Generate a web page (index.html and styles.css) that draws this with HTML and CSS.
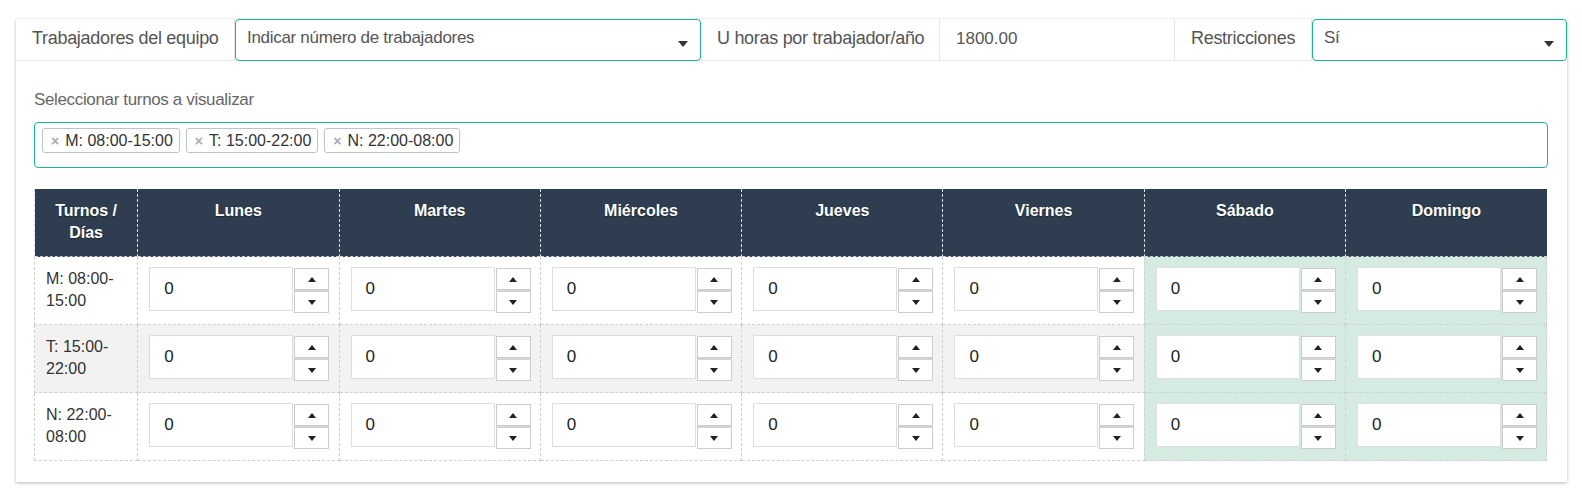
FILE: index.html
```html
<!DOCTYPE html>
<html lang="es">
<head>
    <meta charset="UTF-8">
    <meta name="viewport" content="width=device-width, initial-scale=1.0">
    <title>Turnos</title>
    <link rel="stylesheet" href="styles.css">
</head>
<body>
    <div class="page">
        <div class="card">
            <div class="toolbar">
                <div class="addon">Trabajadores del equipo</div>
                <div class="select">Indicar número de trabajadores<span class="caret"></span></div>
                <div class="addon">U horas por trabajador/año</div>
                <div class="field">1800.00</div>
                <div class="addon">Restricciones</div>
                <div class="select">Sí<span class="caret"></span></div>
            </div>

            <div class="card-body">
                <div class="shifts-label">Seleccionar turnos a visualizar</div>
                <div class="tagbox">
                    <span class="tag"><span class="tag-x">×</span>M: 08:00-15:00</span>
                    <span class="tag"><span class="tag-x">×</span>T: 15:00-22:00</span>
                    <span class="tag"><span class="tag-x">×</span>N: 22:00-08:00</span>
                </div>

                <table class="grid" id="grid">
                    <thead>
                        <tr>
                            <th class="first">Turnos / Días</th>
                            <th>Lunes</th>
                            <th>Martes</th>
                            <th>Miércoles</th>
                            <th>Jueves</th>
                            <th>Viernes</th>
                            <th>Sábado</th>
                            <th>Domingo</th>
                        </tr>
                    </thead>
                    <tbody></tbody>
                </table>
            </div>
        </div>
    </div>

    <script>
        const shifts = ['M: 08:00-15:00', 'T: 15:00-22:00', 'N: 22:00-08:00'];
        const days = 7;

        function spinner() {
            return '<div class="spin">' +
                '<input class="spin-input" type="text" value="0">' +
                '<div class="spin-btns">' +
                '<button class="spin-btn"><span class="tri up"></span></button>' +
                '<button class="spin-btn"><span class="tri down"></span></button>' +
                '</div></div>';
        }

        function buildRows() {
            const body = document.querySelector('#grid tbody');
            let html = '';
            shifts.forEach(function (s) {
                const parts = s.split('-');
                html += '<tr><td class="shift">' + parts[0] + '-<br>' + parts[1] + '</td>';
                for (let d = 0; d < days; d++) {
                    const weekend = d >= 5 ? ' weekend' : '';
                    html += '<td class="day' + weekend + '">' + spinner() + '</td>';
                }
                html += '</tr>';
            });
            body.innerHTML = html;
        }

        buildRows();
    </script>
</body>
</html>
```

FILE: styles.css
```css
body {
    margin: 0;
    background: #fff;
    font-family: "Liberation Sans", Arial, sans-serif;
    color: #333;
}
.page {
    padding: 19px 0 20px 16px;
}
.card {
    width: 1551px;
    background: #fff;
    box-shadow: 0 1px 3px rgba(0, 0, 0, 0.3);
    padding-bottom: 21px;
}
.toolbar {
    display: grid;
    grid-template-columns: 219px 466px 239px 235px 137px 255px;
    height: 42px;
}
.addon,
.field {
    display: flex;
    align-items: center;
    padding: 0 16px 2px;
    font-size: 18px;
    letter-spacing: -0.3px;
    color: #555;
    border-right: 1px solid #e6e6e6;
    border-bottom: 1px solid #e6e6e6;
    white-space: nowrap;
}
.field {
    font-size: 17px;
    letter-spacing: 0;
}
.select {
    position: relative;
    border: 1px solid #1db38f;
    border-radius: 4px;
    padding: 6px 11px 0;
    font-size: 17px;
    letter-spacing: -0.3px;
    line-height: 24px;
    color: #555;
}
.caret {
    position: absolute;
    right: 12px;
    top: 21px;
    border-top: 6px solid #333;
    border-left: 5px solid transparent;
    border-right: 5px solid transparent;
}
.card-body {
    padding: 0 19px 0 18px;
}
.shifts-label {
    margin-top: 28px;
    line-height: 22px;
    font-size: 17px;
    letter-spacing: -0.35px;
    color: #666;
}
.tagbox {
    margin-top: 11px;
    height: 46px;
    box-sizing: border-box;
    border: 1px solid #1db38f;
    border-radius: 4px;
    padding: 5px 7px;
    display: flex;
    align-items: flex-start;
    gap: 6px;
}
.tag {
    display: inline-flex;
    align-items: center;
    height: 25px;
    box-sizing: border-box;
    padding: 0 6px 0 8px;
    border: 1px solid #bcc3cc;
    border-radius: 3px;
    font-size: 16px;
    color: #333;
}
.tag-x {
    color: #a8adb5;
    font-size: 14px;
    font-weight: bold;
    margin-right: 6px;
}
.grid {
    margin-top: 21px;
    width: 1513px;
    border-collapse: collapse;
    table-layout: fixed;
}
.grid th {
    background: #2e3e50;
    color: #fff;
    font-size: 16px;
    font-weight: bold;
    line-height: 22px;
    padding: 11px 8px 12px;
    vertical-align: top;
    text-shadow: 0 1px 1px rgba(0, 0, 0, 0.45);
    border-left: 1px dashed #d8dde2;
    width: 180px;
}
.grid th.first {
    width: 80px;
    padding: 11px 10px 12px;
}
.grid td {
    border: 1px dashed #cfcfcf;
    padding: 10px 10px 11px 11px;
    vertical-align: middle;
}
.grid td.shift {
    font-size: 16px;
    line-height: 22px;
    color: #333;
    vertical-align: top;
    padding-top: 11px;
    padding-bottom: 11px;
}
.grid tbody tr:nth-child(2) td {
    background: #f2f2f2;
}
.grid tbody tr td.weekend {
    background: #d5ebe1;
}
.spin {
    display: flex;
    align-items: flex-start;
    gap: 1px;
}
.spin-input {
    width: 144px;
    height: 44px;
    box-sizing: border-box;
    border: 1px solid #dedede;
    padding: 0 14px;
    font-family: "Liberation Sans", Arial, sans-serif;
    font-size: 17px;
    color: #222;
    background: #fff;
    outline: none;
}
.spin-btns {
    display: flex;
    flex-direction: column;
    margin-top: 1px;
}
.spin-btn {
    width: 35px;
    height: 22px;
    border: 1px solid #ccc;
    background: #fff;
    padding: 0;
    display: flex;
    align-items: center;
    justify-content: center;
}
.spin-btn + .spin-btn {
    border-top: 2px solid #d4d4d4;
    height: 23px;
}
.tri {
    border-left: 4px solid transparent;
    border-right: 4px solid transparent;
}
.tri.up {
    border-bottom: 5px solid #222;
}
.tri.down {
    border-top: 5px solid #222;
}
```
